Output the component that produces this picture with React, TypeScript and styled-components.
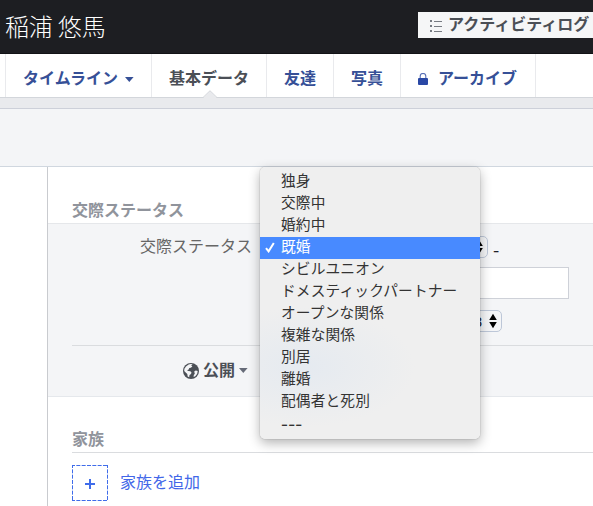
import { ReactNode } from 'react';
import styled, { createGlobalStyle } from 'styled-components';

const GlobalStyle = createGlobalStyle`
  * {
    box-sizing: border-box;
  }

  body {
    margin: 0;
    background-color: #fff;
    color: #4b4f56;
    font-family: 'Liberation Sans', 'Noto Sans CJK JP', sans-serif;
    font-size: 16px;
    overflow: hidden;
  }
`;

const Page = styled.div`
  width: 593px;
  height: 506px;
  display: flex;
  flex-direction: column;
  overflow: hidden;
`;

const Cover = styled.header`
  height: 54px;
  flex: none;
  display: flex;
  justify-content: space-between;
  align-items: flex-start;
  background-color: #1d1e22;
  border-bottom: 1px solid #121316;
`;

const UserName = styled.h1`
  margin: 8px 0 0 5px;
  color: #fff;
  font-family: 'Noto Sans CJK JP', sans-serif;
  font-size: 24px;
  font-weight: 300;
  letter-spacing: -0.15px;
  line-height: 36px;
  white-space: nowrap;
`;

const LogButton = styled.div`
  width: 175px;
  height: 26px;
  margin-top: 12px;
  padding-left: 12px;
  display: flex;
  align-items: center;
  gap: 6px;
  background-color: #f5f6f7;
  font-weight: 700;
  line-height: 26px;
  white-space: nowrap;

  svg {
    flex: none;
    margin-top: 2px;
  }
`;

const Tabs = styled.nav`
  height: 44px;
  flex: none;
  display: flex;
  padding-left: 5px;
  border-bottom: 1px solid #d3d6db;
`;

const Tab = styled.div<{ width: number; gap?: number; active?: boolean }>`
  width: ${props => props.width}px;
  height: 43px;
  padding: 7px 0 0 17px;
  display: flex;
  align-items: center;
  gap: ${props => props.gap ?? 0}px;
  position: relative;
  border-left: 1px solid #e9eaed;
  color: ${props => (props.active ? '#4b4f56' : '#365097')};
  font-weight: 700;
  line-height: 24px;
  white-space: nowrap;
`;

const TabEnd = styled.div`
  width: 1px;
  background-color: #e9eaed;
`;

const TabNotch = styled.svg`
  position: absolute;
  left: 51px;
  bottom: -1px;
`;

const Band = styled.div`
  height: 11px;
  flex: none;
  background-color: #e9eaed;
  border-bottom: 1px solid #cdd0d9;
`;

const Heading = styled.div`
  height: 58px;
  flex: none;
  background-color: #f4f5f7;
  border-bottom: 1px solid #d0d7df;
`;

const Content = styled.main`
  flex: 1;
  margin-left: 47px;
  border-left: 1px solid #c9cbcf;
`;

const SectionTitle = styled.h2`
  height: 24px;
  margin: 0;
  color: #90949c;
  font-size: 16px;
  font-weight: 700;
  line-height: 24px;
`;

const StatusHead = styled.div`
  height: 57px;
  padding: 32px 0 0 24px;
  border-bottom: 1px solid #e5e7ea;
`;

const Form = styled.div`
  height: 173px;
  padding: 12px 0 0 24px;
  background-color: #f4f5f7;
  border-bottom: 1px solid #e5e8ec;
`;

const Field = styled.div<{ gap: number }>`
  display: flex;
  align-items: center;
  margin-bottom: ${props => props.gap}px;
`;

const Label = styled.div`
  width: 188px;
  padding-right: 8px;
  color: #666;
  line-height: 22px;
  text-align: right;
  white-space: nowrap;
`;

const SelectWrap = styled.div`
  position: relative;
`;

const Select = styled.div<{ width: number }>`
  width: ${props => props.width}px;
  height: 22px;
  padding: 0 4px 0 8px;
  display: flex;
  align-items: center;
  justify-content: flex-end;
  gap: 7px;
  border: 1px solid #bdc7d8;
  border-radius: 5px;
  color: #1d2129;
  font-size: 15px;
`;

const Dash = styled.span`
  height: 22px;
  margin-left: 5px;
  color: #1d2129;
  font-family: 'Noto Sans CJK JP', sans-serif;
  font-size: 18px;
  line-height: 26px;
`;

const TextBox = styled.div`
  width: 309px;
  height: 32px;
  background-color: #fff;
  border: 1px solid #ced1d8;
`;

const Menu = styled.ul`
  width: 220px;
  height: 272px;
  margin: 0;
  padding: 4px 0;
  position: absolute;
  left: 0;
  top: -69px;
  z-index: 10;
  list-style: none;
  border-radius: 5px;
  background: radial-gradient(ellipse 110px 60px at 45px 200px, #e5eaf0, #efefef);
  box-shadow: 0 0 1px rgba(0, 0, 0, 0.5), 0 4px 12px rgba(0, 0, 0, 0.3);
`;

const MenuItem = styled.li<{ selected: boolean }>`
  height: 22px;
  padding: 0 0 2px 5px;
  display: flex;
  align-items: center;
  color: ${props => (props.selected ? '#fff' : '#333')};
  background-color: ${props => (props.selected ? '#488aff' : 'transparent')};
  font-size: 14.7px;
  letter-spacing: 0.15px;
  line-height: 20px;
  white-space: nowrap;
`;

const Blank = styled.span`
  font-family: 'Noto Sans CJK JP', sans-serif;
  font-size: 20px;
  letter-spacing: 0.2px;
`;

const CheckBox = styled.span`
  width: 16px;
  height: 12px;
  display: flex;
`;

const Privacy = styled.div`
  height: 50px;
  padding-left: 111px;
  display: flex;
  align-items: center;
  border-top: 1px solid #dadcdf;
  color: #4b4f56;
  font-weight: 700;
  line-height: 24px;

  span {
    margin: 0 4px;
  }
`;

const Family = styled.section`
  padding: 31px 0 0 24px;
`;

const FamilyHead = styled.div`
  height: 25px;
  border-bottom: 1px solid #dadcdf;
`;

const AddFamily = styled.div`
  margin-top: 12px;
  display: flex;
  align-items: center;
  gap: 12px;
  color: #4267e8;
  line-height: 24px;
`;

const items = [
  '独身',
  '交際中',
  '婚約中',
  '既婚',
  'シビルユニオン',
  'ドメスティックパートナー',
  'オープンな関係',
  '複雑な関係',
  '別居',
  '離婚',
  '配偶者と死別',
  '---',
];

const Caret = ({ color }: { color: string }) => (
  <svg width="9" height="5" viewBox="0 0 9 5">
    <path d="M0 0h8.6L4.3 5z" fill={color} />
  </svg>
);

const UpDown = () => (
  <svg width="8" height="16" viewBox="0 0 8 16">
    <path d="M4 .8l3.8 6.2H.2zM4 15.2l3.8-6.2H.2z" fill="#000" />
  </svg>
);

const ListIcon = () => (
  <svg width="12" height="13" viewBox="0 0 12 13" fill="#777b82" shapeRendering="crispEdges">
    <path d="M0 0h2v2H0zM0 5h2v2H0zM0 10h2v2H0zM4 1h8v1H4zM4 6h8v1H4zM4 11h8v1H4z" />
  </svg>
);

const LockIcon = () => (
  <svg width="10" height="12" viewBox="0 0 10 12">
    <path d="M2.2 6V3.2a2.8 2.7 0 0 1 5.6 0V6" fill="none" stroke="#5970b5" strokeWidth="1.1" />
    <rect y="5" width="10" height="7" rx="1" fill="#2a48a5" />
  </svg>
);

const GlobeIcon = () => (
  <svg width="16" height="16" viewBox="0 0 16 16">
    <circle cx="8" cy="8" r="8" fill="#4b4f56" />
    <path
      d="M9.6 1.2 8.2 2.4l1.2 1-1.6 1.3-1.5.3-.6 1.4-1.6.8 1.2.8 2.1.2 1.2 1.6-.9 1.5-1.2.7-.3 2.2-1.5-.8-.4-2.3-1.6-1.6-1.5-1.5.2-2.2L3 3.4l2.6-1.9 2-.5z"
      fill="#f4f5f7"
    />
    <path d="m11.2 8.6 1.6-1.2 1.9.7-.5 2.6-1.9 2.5-1.7.7.2-1.9 1-1.2z" fill="#f4f5f7" />
  </svg>
);

const AddIcon = () => (
  <svg width="36" height="36" viewBox="0 0 36 36" fill="none" stroke="#3f6cea">
    <path d="M0 .5h36M0 35.5h36M.5 0v36M35.5 0v36" strokeDasharray="4 1.33" strokeDashoffset="1" />
    <path d="M13 19h10M18 14v10" strokeWidth="2" />
  </svg>
);

const SelectField = ({ width, value, children }: { width: number; value?: string; children?: ReactNode }) => (
  <SelectWrap>
    <Select width={width}>
      {value}
      <UpDown />
    </Select>
    {children}
  </SelectWrap>
);

const App = () => {
  return (
    <Page>
      <GlobalStyle />
      <Cover>
        <UserName>稲浦 悠馬</UserName>
        <LogButton>
          <ListIcon />
          アクティビティログ
        </LogButton>
      </Cover>

      <Tabs>
        <Tab width={146} gap={7}>
          タイムライン
          <Caret color="#365097" />
        </Tab>
        <Tab width={115} active>
          基本データ
          <TabNotch width="14" height="8" viewBox="0 0 14 8">
            <path d="M0 8 7 .7 14 8z" fill="#e9eaed" />
            <path d="M0 7.5 7 .7l7 6.8" fill="none" stroke="#d3d6db" />
          </TabNotch>
        </Tab>
        <Tab width={67}>友達</Tab>
        <Tab width={67}>写真</Tab>
        <Tab width={135} gap={10}>
          <LockIcon />
          アーカイブ
        </Tab>
        <TabEnd />
      </Tabs>
      <Band />
      <Heading />

      <Content>
        <StatusHead>
          <SectionTitle>交際ステータス</SectionTitle>
        </StatusHead>
        <Form>
          <Field gap={9}>
            <Label>交際ステータス</Label>
            <SelectField width={228}>
              <Menu>
                {items.map(item => (
                  <MenuItem key={item} selected={item === '既婚'}>
                    <CheckBox>
                      {item === '既婚' && (
                        <svg width="10" height="12" viewBox="0 0 10 12">
                          <path d="M1 7.2 3.6 10.4 8.8 2" fill="none" stroke="#fff" strokeWidth="2" />
                        </svg>
                      )}
                    </CheckBox>
                    {item === '---' ? <Blank>{item}</Blank> : item}
                  </MenuItem>
                ))}
              </Menu>
            </SelectField>
            <Dash>-</Dash>
          </Field>
          <Field gap={11}>
            <Label />
            <TextBox />
          </Field>
          <Field gap={13}>
            <Label />
            <SelectField width={242} value="8" />
          </Field>
          <Privacy>
            <GlobeIcon />
            <span>公開</span>
            <Caret color="#666b78" />
          </Privacy>
        </Form>

        <Family>
          <FamilyHead>
            <SectionTitle>家族</SectionTitle>
          </FamilyHead>
          <AddFamily>
            <AddIcon />
            <span>家族を追加</span>
          </AddFamily>
        </Family>
      </Content>
    </Page>
  );
};

export default App;
